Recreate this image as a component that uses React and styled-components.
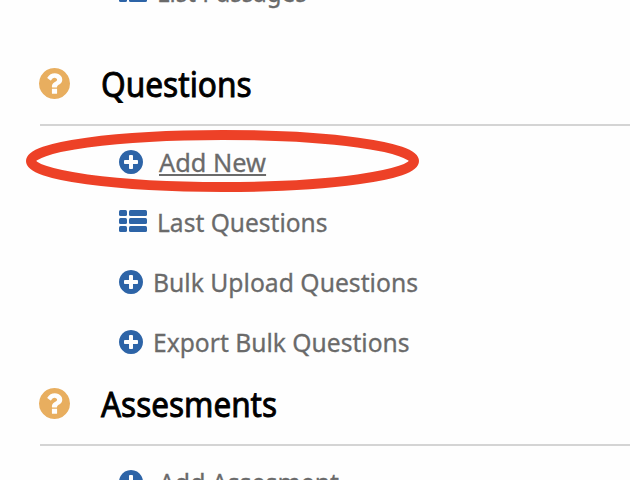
import React from "react";
import styled, { createGlobalStyle } from "styled-components";

const GlobalStyle = createGlobalStyle`
  * { box-sizing: border-box; }
  body { margin: 0; background: #fefefe; overflow: hidden; }
`;

const Page = styled.main`
  position: relative;
  width: 630px;
  height: 480px;
  overflow: hidden;
  background: #fefefe;
  font-family: "Noto Sans", "Open Sans", sans-serif;
`;

const Menu = styled.div`
  display: flex;
  flex-direction: column;
  margin-top: -44px;
`;

const SectionHeader = styled.header`
  display: flex;
  align-items: center;
  height: 74px;
  margin-left: 40px;
  padding-bottom: 9px;
  border-bottom: 2px solid #d4d4d4;
`;

const HeaderIcon = styled.svg`
  flex: none;
  width: 31px;
  height: 31px;
  margin-left: -1px;
  fill: #e8ae5f;
`;

const Title = styled.h2`
  margin: 0 0 0 31px;
  font-size: 34px;
  font-weight: 400;
  line-height: 48px;
  color: #000;
  white-space: nowrap;
  -webkit-text-stroke: 0.9px #000;
  transform: scaleX(${(p) => p.$stretch});
  transform-origin: left;
`;

const Items = styled.ul`
  list-style: none;
  margin: 0;
  padding: 6px 0 0 119px;
`;

const PreviousItems = styled(Items)`
  padding-bottom: 30px;
`;

const Item = styled.li`
  display: flex;
  align-items: center;
  height: 60px;
`;

const ItemIcon = styled.svg`
  flex: none;
  width: ${(p) => p.$width}px;
  height: 24px;
  fill: #2d64a7;
`;

const Label = styled.a`
  margin-left: ${(p) => p.$gap}px;
  font-size: 26px;
  line-height: 36px;
  color: #6a6a6a;
  white-space: nowrap;
  -webkit-text-stroke: 0.3px #6a6a6a;
  text-decoration: ${(p) => (p.$active ? "underline" : "none")};
  text-decoration-thickness: 2px;
  text-underline-offset: 2px;
  text-decoration-skip-ink: none;
  transform: scaleX(${(p) => p.$stretch});
  transform-origin: left;
`;

const Highlight = styled.svg`
  position: absolute;
  left: 20px;
  top: 124px;
  width: 406px;
  height: 74px;
  pointer-events: none;
`;

const QuestionIcon = () => (
  <HeaderIcon viewBox="0 0 1536 1536">
    <path d="M896 1248v-192q0-14-9-23t-23-9h-192q-14 0-23 9t-9 23v192q0 14 9 23t23 9h192q14 0 23-9t9-23zm256-672q0-88-55.5-163t-138.5-116-170-41q-243 0-371 213-15 24 8 42l132 100q7 6 19 6 16 0 25-12 53-68 86-92 34-24 86-24 48 0 85.5 26t37.5 59q0 38-20 61t-68 45q-63 28-115.5 86.5t-52.5 125.5v36q0 14 9 23t23 9h192q14 0 23-9t9-23q0-19 21.5-49.5t54.5-49.5q32-18 49-28.5t46-35 44.5-48 28-60.5 12.5-81zm384 192q0 209-103 385.5t-279.5 279.5-385.5 103-385.5-103-279.5-279.5-103-385.5 103-385.5 279.5-279.5 385.5-103 385.5 103 279.5 279.5 103 385.5z" />
  </HeaderIcon>
);

const PlusIcon = () => (
  <ItemIcon $width={24} viewBox="0 0 1536 1536">
    <path d="M1216 832v-128q0-26-19-45t-45-19h-256v-256q0-26-19-45t-45-19h-128q-26 0-45 19t-19 45v256h-256q-26 0-45 19t-19 45v128q0 26 19 45t45 19h256v256q0 26 19 45t45 19h128q26 0 45-19t19-45v-256h256q26 0 45-19t19-45zm320-64q0 209-103 385.5t-279.5 279.5-385.5 103-385.5-103-279.5-279.5-103-385.5 103-385.5 279.5-279.5 385.5-103 385.5 103 279.5 279.5 103 385.5z" />
  </ItemIcon>
);

const ListIcon = () => (
  <ItemIcon $width={28} viewBox="0 0 28 24">
    {[0, 8, 16].map((y) => (
      <React.Fragment key={y}>
        <rect x="0" y={y} width="8" height="6" rx="1.5" />
        <rect x="10" y={y} width="18" height="6" rx="1.5" />
      </React.Fragment>
    ))}
  </ItemIcon>
);

const MenuItem = ({ list, children, ...rest }) => (
  <Item>
    {list ? <ListIcon /> : <PlusIcon />}
    <Label {...rest}>{children}</Label>
  </Item>
);

export default function App() {
  return (
    <Page>
      <GlobalStyle />
      <Menu>
        <PreviousItems>
          <MenuItem list $gap={10} $stretch={0.925}>List Passages</MenuItem>
        </PreviousItems>
        <SectionHeader>
          <QuestionIcon />
          <Title $stretch={0.93}>Questions</Title>
        </SectionHeader>
        <Items>
          <MenuItem $gap={16} $stretch={0.976} $active>Add New</MenuItem>
          <MenuItem list $gap={10} $stretch={0.944}>Last Questions</MenuItem>
          <MenuItem $gap={10} $stretch={0.95}>Bulk Upload Questions</MenuItem>
          <MenuItem $gap={10} $stretch={0.947}>Export Bulk Questions</MenuItem>
        </Items>
        <SectionHeader>
          <QuestionIcon />
          <Title $stretch={0.925}>Assesments</Title>
        </SectionHeader>
        <Items>
          <MenuItem $gap={16} $stretch={0.955}>Add Assesment</MenuItem>
        </Items>
      </Menu>
      <Highlight viewBox="20 124 406 74">
        <ellipse cx="222.5" cy="161" rx="191.5" ry="26" fill="none" stroke="#ed4127" strokeWidth="10" />
      </Highlight>
    </Page>
  );
}
